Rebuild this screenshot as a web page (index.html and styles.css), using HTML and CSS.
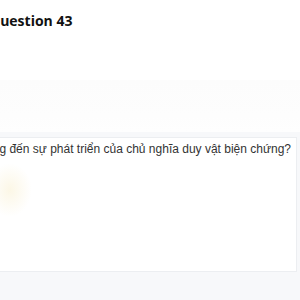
FILE: index.html
```html
<!DOCTYPE html>
<html lang="vi">
<head>
<meta charset="UTF-8">
<title>Question 43</title>
<link rel="stylesheet" href="styles.css">
</head>
<body>
  <div class="page">
    <!-- Header -->
    <div class="head">
      <h1 class="title">Question 43</h1>
    </div>
    <div class="band"></div>

    <!-- Question card -->
    <div class="card">
      <div class="glow"></div>
      <p class="question">Yếu tố nào ảnh hưởng đến sự phát triển của chủ nghĩa duy vật biện chứng?</p>
    </div>
  </div>
</body>
</html>
```
FILE: styles.css
```css
body{
  margin:0;
  background:#f7f8fa;
  font-family:'Liberation Sans',Arial,sans-serif;
  overflow:hidden;
}
.page{margin-left:-160px;}
.head{background:#fff;height:80px;}
.title{
  margin:0;
  padding-top:10px;
  padding-left:149px;
  font-family:'Open Sans',sans-serif;
  font-weight:700;
  font-size:14px;
  color:#111;
  line-height:22px;
}
.band{height:52px;background:linear-gradient(#fcfcfc,#fdfdfd 70%,#fefefe);}
.card{
  position:relative;
  background:#fff;
  border:1px solid #eceef1;
  border-left:none;
  width:456px;
  height:133px;
  margin-top:5px;
}
.question{
  margin:0;
  padding:3px 0 0 0;
  font-size:12px;
  line-height:16px;
  color:#333;
  text-align:right;
  width:451px;
}
.glow{
  position:absolute;
  left:148px;
  top:25px;
  width:44px;
  height:54px;
  border-radius:50%;
  background:radial-gradient(#fcf7e6,rgba(255,255,255,0) 70%);
}
```
